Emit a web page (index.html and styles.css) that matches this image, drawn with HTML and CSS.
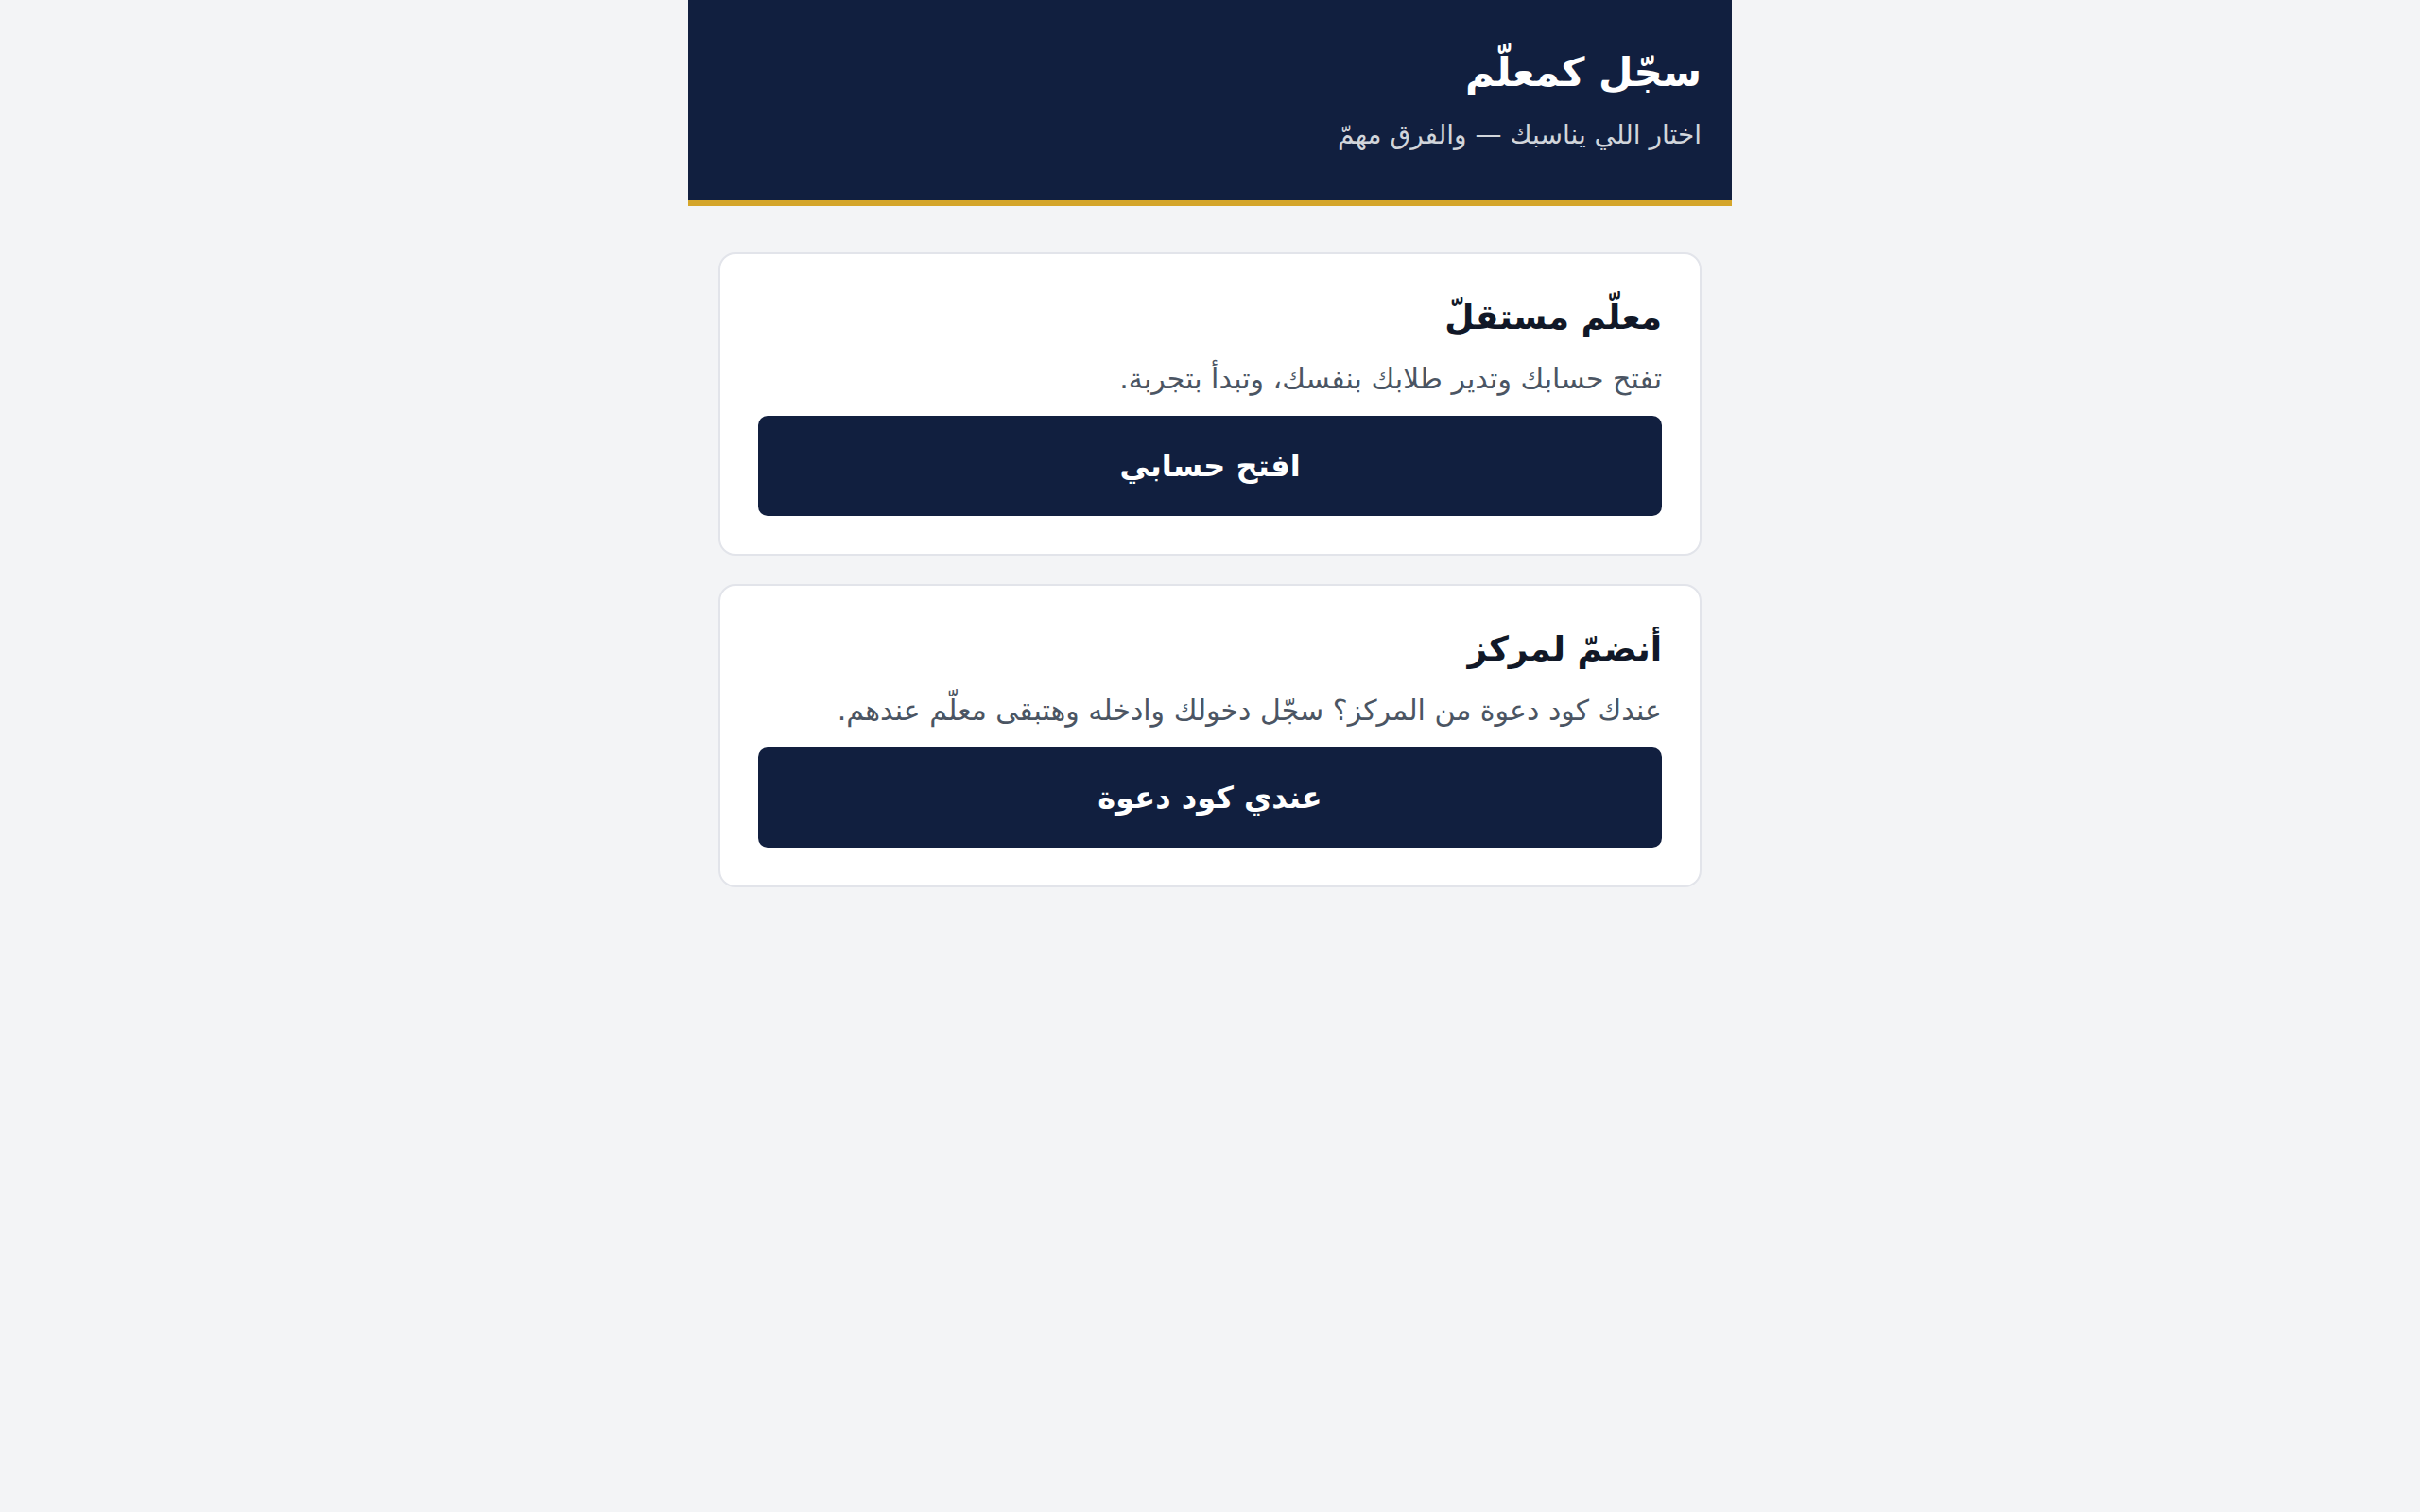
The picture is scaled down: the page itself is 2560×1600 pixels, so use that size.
FILE: index.html
```html
<!DOCTYPE html>
<html lang="ar" dir="rtl">

<head>
  <meta charset="UTF-8">
  <title>سجّل كمعلّم</title>
  <link rel="stylesheet" href="styles.css">
</head>

<body>
  <div class="page">
    <div class="page-header">
      <h1 class="page-title">سجّل كمعلّم</h1>
      <p class="page-sub">اختار اللي يناسبك — والفرق مهمّ</p>
    </div>
    <div class="choice-list">
      <div class="choice-card">
        <h2 class="choice-title">معلّم مستقلّ</h2>
        <p class="choice-desc">تفتح حسابك وتدير طلابك بنفسك، وتبدأ بتجربة.</p>
        <button class="choice-btn" type="button">افتح حسابي</button>
      </div>
      <div class="choice-card">
        <h2 class="choice-title">أنضمّ لمركز</h2>
        <p class="choice-desc">عندك كود دعوة من المركز؟ سجّل دخولك وادخله وهتبقى معلّم عندهم.</p>
        <button class="choice-btn" type="button">عندي كود دعوة</button>
      </div>
    </div>
  </div>
</body>

</html>
```

FILE: styles.css
```css
* {
  box-sizing: border-box;
}
body {
  margin: 0;
  background-color: #f3f4f6;
  font-family: "DejaVu Sans", "Noto Sans", sans-serif;
  color: #111827;
}
.page {
  margin: 0 auto;
  max-width: 1104px;
}
.page-header {
  background-color: #111f3f;
  border-bottom: 6px solid #d4a52b;
  padding: 48px 32px 50px;
  color: #ffffff;
}
.page-title {
  margin: 0;
  font-size: 42px;
  font-weight: bold;
  line-height: 1.4;
}
.page-sub {
  margin: 16px 0 0;
  font-size: 28px;
  color: #d1d5db;
  line-height: 1.4;
}
.choice-list {
  display: flex;
  flex-direction: column;
  gap: 30px;
  padding: 49px 32px;
}
.choice-card {
  background-color: #ffffff;
  border: 2px solid #e2e4ea;
  border-radius: 18px;
  padding: 41px 40px 40px;
}
.choice-title {
  margin: 0;
  font-size: 36px;
  font-weight: bold;
  line-height: 52px;
  color: #111827;
}
.choice-desc {
  margin: 18px 0 18px;
  font-size: 30px;
  line-height: 42px;
  color: #4b5563;
}
.choice-btn {
  display: block;
  width: 100%;
  height: 106px;
  border: 0;
  border-radius: 10px;
  background-color: #111f3f;
  color: #ffffff;
  font-family: inherit;
  font-size: 32px;
  font-weight: bold;
  cursor: pointer;
}
```
